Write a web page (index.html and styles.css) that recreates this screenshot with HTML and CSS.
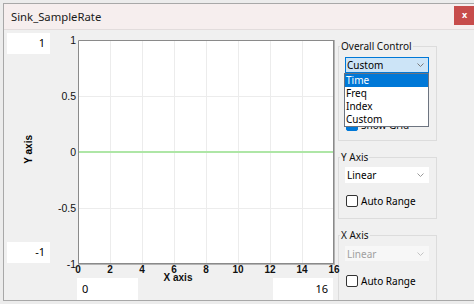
FILE: index.html
```html
<!doctype html>
<html>
  <head>
    <meta charset="utf-8"/>
    <title>Sink_SampleRate</title>
    <link rel="stylesheet" href="styles.css">
  </head>
  <body>
    <div class="win">
      <div class="titlebar">
        <span class="title">Sink_SampleRate</span>
        <span class="close">x</span>
      </div>
      <div class="client">
        <div class="plotpane">
          <div class="plotrow">
            <div class="ycol">
              <div class="tbox">1</div>
              <div class="ytitle">Y axis</div>
              <div class="tbox">-1</div>
            </div>
            <div class="yticks">
              <span style="top:0%">1</span>
              <span style="top:25%">0.5</span>
              <span style="top:50%">0</span>
              <span style="top:75%">-0.5</span>
              <span style="top:100%">-1</span>
            </div>
            <div class="plot">
              <svg width="257" height="225" viewBox="0 0 257 225">
                <g stroke="#ececec" stroke-width="1">
                  <line x1="32.5" y1="0" x2="32.5" y2="224"/>
                  <line x1="64.5" y1="0" x2="64.5" y2="224"/>
                  <line x1="96.5" y1="0" x2="96.5" y2="224"/>
                  <line x1="128.5" y1="0" x2="128.5" y2="224"/>
                  <line x1="160.5" y1="0" x2="160.5" y2="224"/>
                  <line x1="192.5" y1="0" x2="192.5" y2="224"/>
                  <line x1="224.5" y1="0" x2="224.5" y2="224"/>
                  <line x1="0" y1="56.5" x2="256" y2="56.5"/>
                  <line x1="0" y1="168.5" x2="256" y2="168.5"/>
                </g>
                <rect x="1" y="111" width="254" height="2" fill="#aee6a6"/>
                <g fill="none">
                  <path d="M0.5 224 V0.5 H255" stroke="#8a8a8a"/>
                  <path d="M255.5 0 V224" stroke="#8a8a8a"/>
                  <path d="M256.5 0 V225" stroke="#b4b4b4"/>
                  <path d="M0 223.5 H256" stroke="#8a8a8a"/>
                  <path d="M0 224.5 H257" stroke="#b4b4b4"/>
                </g>
              </svg>
            </div>
          </div>
          <div class="xrow">
            <span style="left:0%">0</span>
            <span style="left:12.5%">2</span>
            <span style="left:25%">4</span>
            <span style="left:37.5%">6</span>
            <span style="left:50%">8</span>
            <span style="left:62.5%">10</span>
            <span style="left:75%">12</span>
            <span style="left:87.5%">14</span>
            <span style="left:100%">16</span>
            <div class="xtitle">X axis</div>
          </div>
          <div class="xboxes">
            <div class="tbox left wide">0</div>
            <div class="tbox">16</div>
          </div>
        </div>

        <div class="side">
          <fieldset class="group g-overall">
            <legend>Overall Control</legend>
            <div class="combo-wrap">
              <div class="combo active">
                <span>Custom</span>
                <svg class="chev" width="7" height="4" viewBox="0 0 7 4"><path d="M0.5 0.5 L3.5 3.5 L6.5 0.5" fill="none" stroke="#7a7a7a"/></svg>
              </div>
              <ul class="droplist">
                <li class="sel">Time</li>
                <li>Freq</li>
                <li>Index</li>
                <li>Custom</li>
              </ul>
            </div>
            <label class="chk showgrid"><span class="box checked"></span>Show Grid</label>
          </fieldset>

          <fieldset class="group g-y">
            <legend>Y Axis</legend>
            <div class="combo">
              <span>Linear</span>
              <svg class="chev" width="7" height="4" viewBox="0 0 7 4"><path d="M0.5 0.5 L3.5 3.5 L6.5 0.5" fill="none" stroke="#9a9a9a"/></svg>
            </div>
            <label class="chk"><span class="box"></span>Auto Range</label>
          </fieldset>

          <fieldset class="group g-x">
            <legend>X Axis</legend>
            <div class="combo disabled">
              <span>Linear</span>
              <svg class="chev" width="7" height="4" viewBox="0 0 7 4"><path d="M0.5 0.5 L3.5 3.5 L6.5 0.5" fill="none" stroke="#c4c4c4"/></svg>
            </div>
            <label class="chk"><span class="box"></span>Auto Range</label>
          </fieldset>
        </div>
      </div>
    </div>
  </body>
</html>
```
FILE: styles.css
```css
* {
  box-sizing: border-box;
}

html, body {
  margin: 0;
  padding: 0;
  height: 100%;
  overflow: hidden;
}

body {
  background: #ececec;
  font-family: "Noto Sans", "DejaVu Sans", sans-serif;
  color: #000;
}

.win {
  margin: 3px 0 0 3px;
  width: 472px;
  height: 298px;
  border: 1px solid #a8a8a8;
  background: #f0f0f0;
  display: flex;
  flex-direction: column;
}

.titlebar {
  height: 26px;
  flex: none;
  display: flex;
  align-items: flex-start;
  justify-content: space-between;
  background: #f6eeee;
  border-bottom: 1px solid #e2dcdc;
}

.title {
  font-size: 11.3px;
  line-height: 14px;
  margin: 6px 0 0 7px;
  color: #1a1a1a;
}

.close {
  width: 21px;
  height: 19px;
  margin-top: 2px;
  margin-right: -1px;
  background: #c74c4b;
  color: #fff;
  font-size: 9px;
  font-weight: bold;
  line-height: 18px;
  text-align: center;
}

.client {
  flex: 1;
  display: flex;
  padding-left: 3px;
  overflow: hidden;
}

/* plot side */

.plotpane {
  width: 327px;
  padding-top: 3px;
  display: flex;
  flex-direction: column;
}

.plotrow {
  display: flex;
  height: 231px;
}

.ycol {
  width: 43px;
  height: 230px;
  display: flex;
  flex-direction: column;
  justify-content: space-between;
}

.tbox {
  height: 21px;
  width: 43px;
  background: #fff;
  font-size: 11px;
  line-height: 20px;
  text-align: right;
  padding-right: 5px;
}

.tbox.left {
  text-align: left;
  padding-left: 5px;
}

.tbox.wide {
  width: 61px;
}

.ytitle {
  align-self: center;
  writing-mode: vertical-rl;
  transform: rotate(180deg);
  font-family: "Liberation Sans", Arial, sans-serif;
  font-weight: bold;
  font-size: 10px;
  line-height: 10px;
  margin-top: 2px;
}

.yticks {
  width: 28px;
  height: 224px;
  margin-top: 7px;
  position: relative;
  font-family: "Liberation Sans", Arial, sans-serif;
  font-size: 10.5px;
  color: #111;
}

.yticks span {
  position: absolute;
  right: 2px;
  line-height: 12px;
  transform: translateY(-50%);
}

.plot {
  width: 256px;
  height: 224px;
  margin-top: 7px;
  background: #fff;
}

.plot svg {
  display: block;
  overflow: visible;
}

.xrow {
  position: relative;
  margin-left: 71px;
  width: 256px;
  height: 14px;
  font-family: "Liberation Sans", Arial, sans-serif;
  font-weight: bold;
  font-size: 10px;
  color: #111;
}

.xrow span {
  position: absolute;
  top: 1px;
  line-height: 10px;
  transform: translateX(-50%);
}

.xtitle {
  position: absolute;
  left: 100px;
  top: 9px;
  line-height: 10px;
  transform: translateX(-50%);
}

.xboxes {
  margin-left: 70px;
  width: 256px;
  display: flex;
  justify-content: space-between;
}

.xboxes .tbox {
  height: 22px;
  width: 60px;
  line-height: 21px;
}

.xboxes .tbox.wide {
  width: 61px;
}

/* right panel */

.side {
  width: 99px;
  margin-left: 4px;
  padding-top: 9px;
  display: flex;
  flex-direction: column;
  gap: 9px;
}

.group {
  margin: 0;
  padding: 0 0 0 6px;
  border: 1px solid #dcdcdc;
  min-width: 0;
}

.group legend {
  padding: 0 1px;
  margin-left: -5px;
  font-size: 10px;
  line-height: 14px;
  color: #111;
}

.g-overall {
  height: 102px;
}

.g-y {
  height: 69px;
}

.g-x {
  flex: 1;
  margin-bottom: -4px;
}

.combo-wrap {
  position: relative;
  margin-top: 4px;
  width: 84px;
}

.combo {
  width: 84px;
  height: 16px;
  margin-top: 3px;
  padding: 0 5px 0 2px;
  display: flex;
  align-items: center;
  justify-content: space-between;
  background: #fff;
  font-size: 10px;
}

.combo-wrap .combo {
  margin-top: 0;
}

.combo.active {
  background: #cce4f7;
  border: 1px solid #0078d7;
  padding-left: 1px;
  padding-right: 4px;
}

.combo.disabled {
  background: #f7f7f7;
  color: #a0a0a0;
}

.g-x .combo {
  margin-top: 4px;
  height: 15px;
}

.droplist {
  position: absolute;
  top: 100%;
  left: -1px;
  width: 85px;
  margin: 0;
  padding: 0;
  list-style: none;
  background: #fff;
  border: 1px solid #6d7480;
  font-size: 10px;
  z-index: 2;
}

.droplist li {
  height: 13px;
  line-height: 13px;
  padding-left: 1px;
}

.droplist li.sel {
  background: #0078d7;
  color: #fff;
}

.chk {
  display: flex;
  align-items: center;
  gap: 3px;
  height: 14px;
  margin-top: 11px;
  margin-left: 1px;
  font-size: 10px;
}

.g-x .chk {
  margin-top: 13px;
}

.chk.showgrid {
  margin-top: 45px;
}

.box {
  width: 12px;
  height: 12px;
  border: 1px solid #333;
  border-radius: 2px;
  background: #fff;
  flex: none;
}

.box.checked {
  background: #0078d7;
  border-color: #0078d7;
}
```
